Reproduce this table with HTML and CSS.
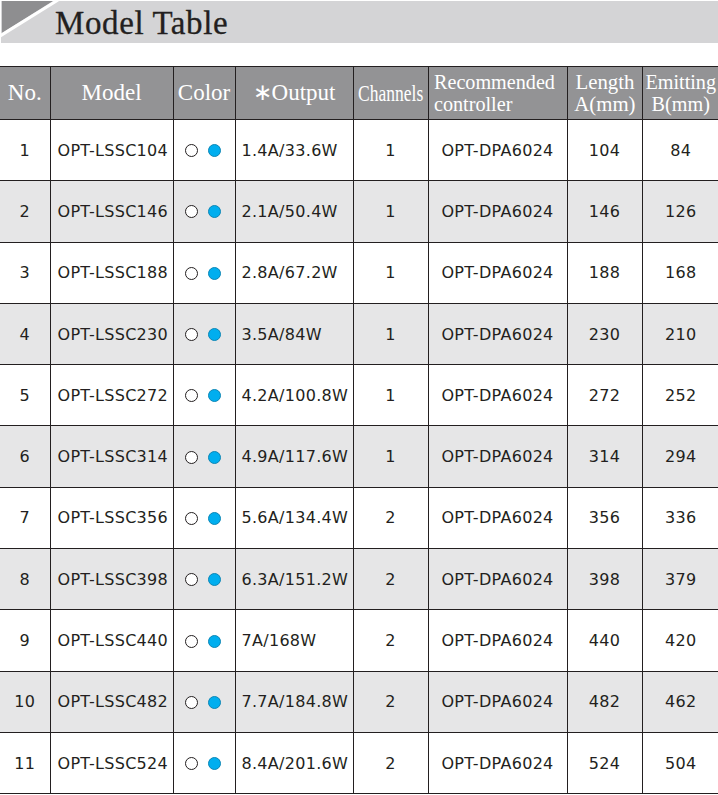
FILE: index.html
```html
<!DOCTYPE html>
<html>
<head>
<meta charset="utf-8">
<link rel="stylesheet" href="styles.css">
</head>
<body>
<div class="titlebar">
  <svg class="corner" width="60" height="42" viewBox="0 0 60 42">
    <polygon points="1,0 52,0 1,32" fill="#8e8e90"/>
    <line x1="-1" y1="35" x2="57" y2="-1" stroke="#ffffff" stroke-width="3"/>
  </svg>
  <h1 class="title">Model Table</h1>
</div>
<table class="models">
  <colgroup>
    <col class="c1"><col class="c2"><col class="c3"><col class="c4"><col class="c5"><col class="c6"><col class="c7"><col class="c8">
  </colgroup>
  <thead>
    <tr>
      <th class="center"><span class="h">No.</span></th>
      <th class="center"><span class="h">Model</span></th>
      <th class="center"><span class="h">Color</span></th>
      <th class="center"><span class="h">∗Output</span></th>
      <th class="center"><span class="h cond">Channels</span></th>
      <th class="left"><span class="h cond2 rec">Recommended<br>controller</span></th>
      <th class="center"><span class="h cond2 len">Length<br>A(mm)</span></th>
      <th class="center"><span class="h cond2 emi">Emitting<br>B(mm)</span></th>
    </tr>
  </thead>
  <tbody id="rows"></tbody>
</table>
<script src="app.js"></script>
</body>
</html>
```
FILE: styles.css
```css
html, body {
  margin: 0;
  padding: 0;
  background: #ffffff;
}
body {
  width: 718px;
  height: 795px;
  overflow: hidden;
}
.titlebar {
  margin-top: 1px;
  margin-left: 1px;
  height: 42px;
  background: #d4d4d6;
  display: flex;
  align-items: flex-start;
}
.corner {
  display: block;
  flex: none;
}
.title {
  margin: 0 0 0 -6px;
  font-family: "Liberation Serif", "Times New Roman", serif;
  font-weight: normal;
  font-size: 33px;
  line-height: 44px;
  color: #231f20;
  letter-spacing: 0.6px;
  -webkit-text-stroke: 0.3px #231f20;
}
.models {
  margin-top: 23px;
  border-collapse: collapse;
  table-layout: fixed;
  width: 719px;
  font-family: "DejaVu Sans", sans-serif;
  color: #231f20;
}
.c1 { width: 50px; }
.c2 { width: 123px; }
.c3 { width: 62px; }
.c4 { width: 118px; }
.c5 { width: 75px; }
.c6 { width: 139px; }
.c7 { width: 75px; }
.c8 { width: 77px; }
.models th, .models td {
  border: 1.5px solid #231f20;
  padding: 0;
}
.models tr > :first-child { border-left: none; }
.models tr > :last-child { border-right: none; }
.models thead th {
  background: #939395;
  color: #ffffff;
  height: 52px;
  font-family: "Liberation Serif", "Times New Roman", serif;
  font-weight: normal;
  font-size: 23px;
  line-height: 22px;
  vertical-align: middle;
  white-space: nowrap;
  overflow: visible;
}
.models th.left { text-align: left; padding-left: 5px; }
.models th.center { text-align: center; }
.h { display: inline-block; }
.cond { font-size: 24px; transform: scaleX(0.73); margin: 0 -14px; }
.cond2 { font-size: 21px; line-height: 22px; transform-origin: center; }
.rec { transform: scaleX(0.96); transform-origin: left center; }
.len { transform: scaleX(0.99); }
.emi { transform: scaleX(0.96); margin: 0 -4px; }
.models tbody tr { height: 61.3px; }
.models tbody td {
  font-size: 16px;
  letter-spacing: 0.3px;
  vertical-align: middle;
  text-align: center;
  white-space: nowrap;
}
.models tbody tr:nth-child(even) td { background: #e6e6e7; }
.models tbody td.model { text-align: left; padding-left: 7px; }
.models tbody td.out { text-align: left; padding-left: 6px; }
.models tbody td.ctl { text-align: center; }
.dots {
  display: flex;
  justify-content: center;
  gap: 10px;
  padding-top: 1px;
  padding-right: 3px;
}
.dot {
  width: 13px;
  height: 13px;
  border-radius: 50%;
  box-sizing: border-box;
}
.dot.white { border: 1px solid #231f20; background: #fff; }
.dot.blue { background: #00aeef; border: 1px solid #0c86b5; }
```
FILE: app.js
```js
var data = [
  [1, "OPT-LSSC104", "1.4A/33.6W", 1, 104, 84],
  [2, "OPT-LSSC146", "2.1A/50.4W", 1, 146, 126],
  [3, "OPT-LSSC188", "2.8A/67.2W", 1, 188, 168],
  [4, "OPT-LSSC230", "3.5A/84W", 1, 230, 210],
  [5, "OPT-LSSC272", "4.2A/100.8W", 1, 272, 252],
  [6, "OPT-LSSC314", "4.9A/117.6W", 1, 314, 294],
  [7, "OPT-LSSC356", "5.6A/134.4W", 2, 356, 336],
  [8, "OPT-LSSC398", "6.3A/151.2W", 2, 398, 379],
  [9, "OPT-LSSC440", "7A/168W", 2, 440, 420],
  [10, "OPT-LSSC482", "7.7A/184.8W", 2, 482, 462],
  [11, "OPT-LSSC524", "8.4A/201.6W", 2, 524, 504]
];
var tb = document.getElementById("rows");
data.forEach(function (r) {
  var tr = document.createElement("tr");
  tr.innerHTML =
    "<td>" + r[0] + "</td>" +
    "<td class=\"model\">" + r[1] + "</td>" +
    "<td><div class=\"dots\"><span class=\"dot white\"></span><span class=\"dot blue\"></span></div></td>" +
    "<td class=\"out\">" + r[2] + "</td>" +
    "<td>" + r[3] + "</td>" +
    "<td class=\"ctl\">OPT-DPA6024</td>" +
    "<td>" + r[4] + "</td>" +
    "<td>" + r[5] + "</td>";
  tb.appendChild(tr);
});
```
